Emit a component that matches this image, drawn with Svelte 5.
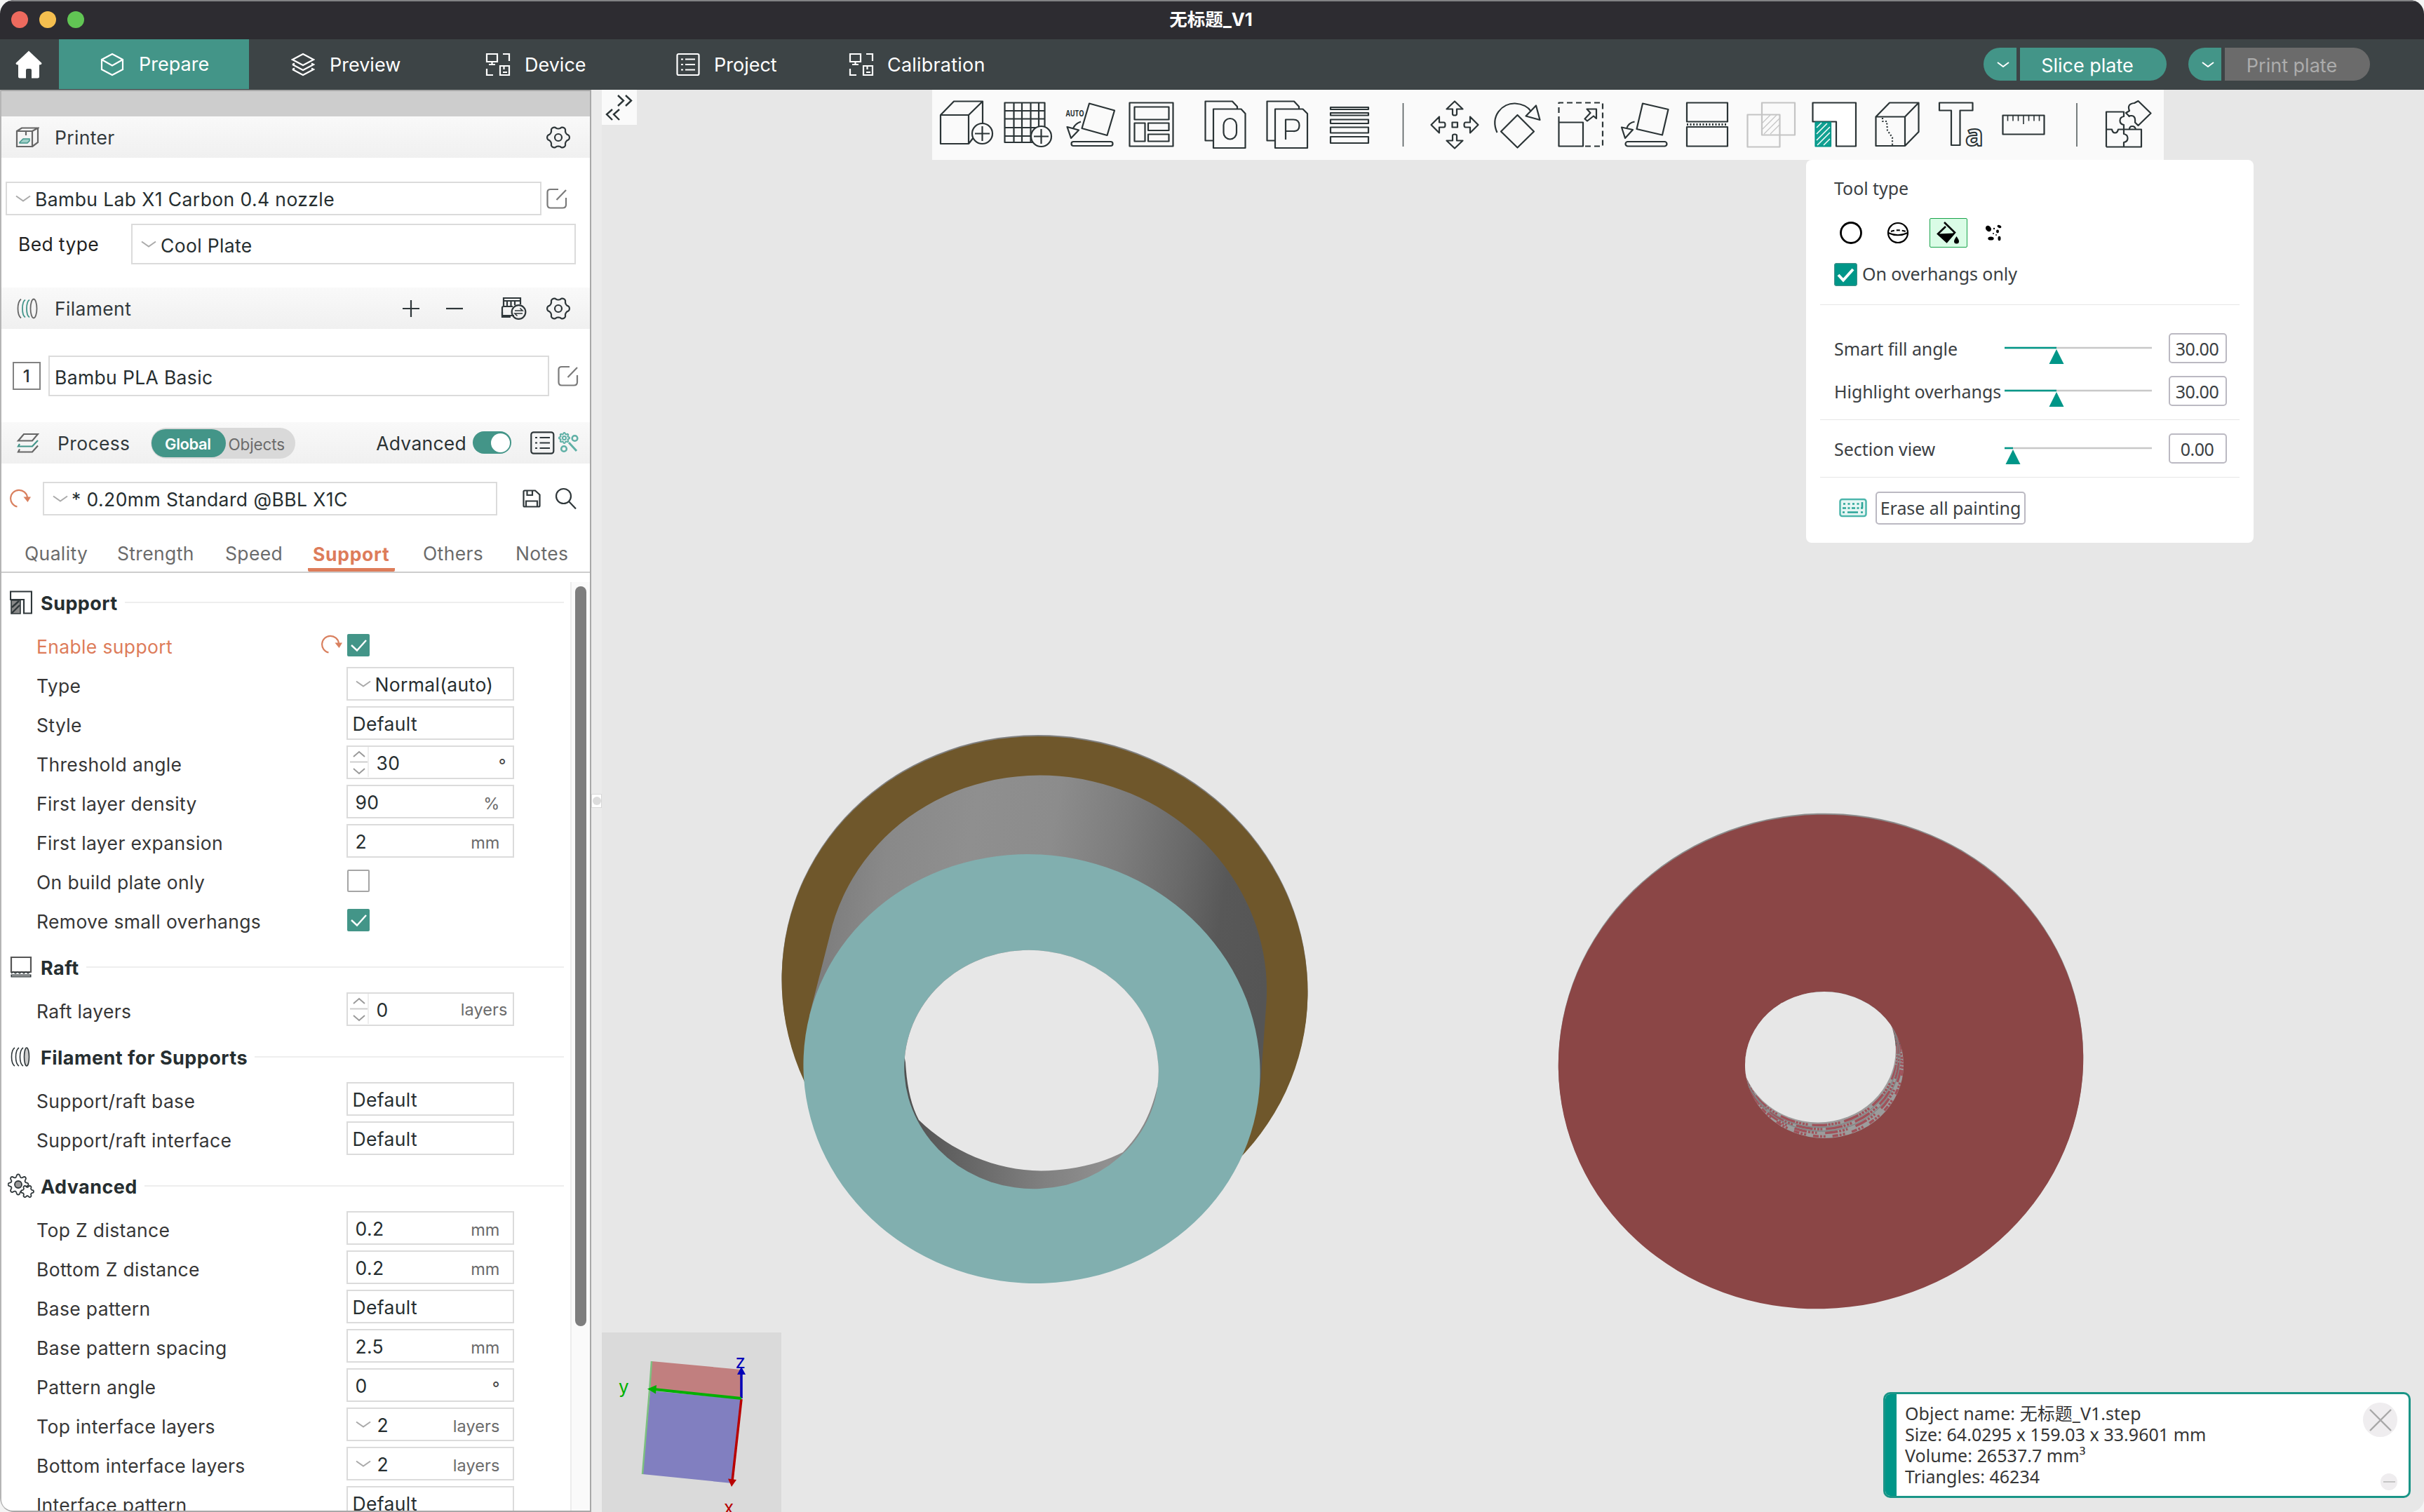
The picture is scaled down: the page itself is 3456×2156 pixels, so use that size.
<script lang="ts">
  const round = (n: number) => Math.round(n * 100) / 100;

  // Closed outline of a soft gear with the given number of lobes.
  function gear(cx: number, cy: number, r: number, depth: number, lobes: number): string {
    const pts: string[] = [];
    for (let i = 0; i < 96; i++) {
      const t = (i / 96) * Math.PI * 2;
      const c = Math.cos(lobes * t);
      const k = r + depth * Math.sign(c) * Math.pow(Math.abs(c), 0.6);
      pts.push(`${round(cx + k * Math.cos(t))} ${round(cy + k * Math.sin(t))}`);
    }
    return 'M' + pts.join('L') + 'Z';
  }

  const nav = [
    { label: 'Preview', icon: 'preview', cls: 'n-preview' },
    { label: 'Device', icon: 'device', cls: 'n-device' },
    { label: 'Project', icon: 'project', cls: 'n-project' },
    { label: 'Calibration', icon: 'device', cls: 'n-calib' },
  ];

  const tabs = ['Quality', 'Strength', 'Speed', 'Support', 'Others', 'Notes'];

  type Row = { label: string; kind: string; value?: string; unit?: string; changed?: boolean; on?: boolean };
  const groups: { title: string; icon: string; rows: Row[] }[] = [
    {
      title: 'Support', icon: 'support',
      rows: [
        { label: 'Enable support', kind: 'check', on: true, changed: true },
        { label: 'Type', kind: 'combo', value: 'Normal(auto)' },
        { label: 'Style', kind: 'select', value: 'Default' },
        { label: 'Threshold angle', kind: 'spin', value: '30', unit: '°' },
        { label: 'First layer density', kind: 'num', value: '90', unit: '%' },
        { label: 'First layer expansion', kind: 'num', value: '2', unit: 'mm' },
        { label: 'On build plate only', kind: 'check', on: false },
        { label: 'Remove small overhangs', kind: 'check', on: true },
      ],
    },
    { title: 'Raft', icon: 'raft', rows: [{ label: 'Raft layers', kind: 'spin', value: '0', unit: 'layers' }] },
    {
      title: 'Filament for Supports', icon: 'spool',
      rows: [
        { label: 'Support/raft base', kind: 'select', value: 'Default' },
        { label: 'Support/raft interface', kind: 'select', value: 'Default' },
      ],
    },
    {
      title: 'Advanced', icon: 'gears',
      rows: [
        { label: 'Top Z distance', kind: 'num', value: '0.2', unit: 'mm' },
        { label: 'Bottom Z distance', kind: 'num', value: '0.2', unit: 'mm' },
        { label: 'Base pattern', kind: 'select', value: 'Default' },
        { label: 'Base pattern spacing', kind: 'num', value: '2.5', unit: 'mm' },
        { label: 'Pattern angle', kind: 'num', value: '0', unit: '°' },
        { label: 'Top interface layers', kind: 'combonum', value: '2', unit: 'layers' },
        { label: 'Bottom interface layers', kind: 'combonum', value: '2', unit: 'layers' },
        { label: 'Interface pattern', kind: 'select', value: 'Default' },
      ],
    },
  ];

  // Toolbar cells: start and width on the toolbar's own axis.
  const tools = [
    { id: 'add', x: 1329, w: 95 }, { id: 'plate', x: 1424, w: 86 }, { id: 'orient', x: 1510, w: 90 },
    { id: 'arrange', x: 1600, w: 95 }, { id: 'objects', x: 1695, w: 95 }, { id: 'parts', x: 1790, w: 90 },
    { id: 'layers', x: 1880, w: 90 }, { id: 'sep1', x: 1970, w: 60 }, { id: 'move', x: 2030, w: 90 },
    { id: 'rotate', x: 2120, w: 90 }, { id: 'scale', x: 2210, w: 90 }, { id: 'flat', x: 2300, w: 90 },
    { id: 'cut', x: 2390, w: 90 }, { id: 'boolean', x: 2480, w: 90 }, { id: 'paint', x: 2570, w: 90 },
    { id: 'seam', x: 2660, w: 90 }, { id: 'text', x: 2750, w: 90 }, { id: 'measure', x: 2840, w: 90 },
    { id: 'sep2', x: 2930, w: 60 }, { id: 'assemble', x: 2990, w: 95 },
  ];

  const ticks = [0, 1, 2, 3, 4, 5, 6];

  const sliders = [
    { label: 'Smart fill angle', value: '30.00', pos: 74 },
    { label: 'Highlight overhangs', value: '30.00', pos: 74 },
  ];
  const section = { label: 'Section view', value: '0.00', pos: 12 };
</script>

{#snippet chevron()}
  <svg class="chev" width="22" height="10" viewBox="0 0 22 10"><path d="M1 1.5 L11 8.5 L21 1.5" /></svg>
{/snippet}

{#snippet settings()}
  <svg class="ico" width="34" height="34" viewBox="0 0 34 34"><path d={gear(17, 17, 14.2, 1.7, 6)} /><circle cx="17" cy="17" r="5" /></svg>
{/snippet}

{#snippet edit()}
  <svg class="ico edit" width="30" height="30" viewBox="0 0 30 30"><path d="M17 2H6Q1.500 2 1.500 6V24Q1.500 28.500 6 28.500H23Q28 28.500 28 24V14" /><path d="M28 3L14.500 17" /></svg>
{/snippet}

{#snippet reset()}
  <svg class="reset" width="30" height="28" viewBox="0 0 30 28"><path d="M10.500 25.500A12 12 0 1 1 25 12" /><path class="tip" d="M19.500 11.500H30L25.500 19Z" /></svg>
{/snippet}

{#snippet slider(s: { label: string; value: string; pos: number })}
  <div class="srow">
    <span class="slabel">{s.label}</span>
    <svg width="212" height="46" viewBox="0 0 212 46">
      <path d="M0 22H210" stroke="#c8c8c8" stroke-width="2.500" />
      <path d="M0 22H{s.pos}" stroke="#009688" stroke-width="2.500" />
      <path d="M{s.pos} 24L{s.pos + 10.5} 45H{s.pos - 10.5}Z" fill="#009688" />
    </svg>
    <span class="sval">{s.value}</span>
  </div>
{/snippet}

{#snippet check(on: boolean | undefined)}
  <span class="check" class:on>
    {#if on}<svg width="32" height="32" viewBox="0 0 32 32"><path d="M6 16L14 23.500L27 9" /></svg>{/if}
  </span>
{/snippet}

<div class="app">
  <header class="title">
    <div class="lights"><i class="red"></i><i class="amber"></i><i class="green"></i></div>
    <span>无标题_V1</span>
  </header>

  <nav class="nav">
    <div class="home">
      <svg width="38" height="40" viewBox="0 0 38 40"><path d="M19 0.500L37.500 18Q37.500 20.500 34 20.500V37Q34 39.500 31.500 39.500H23V28Q23 26 21 26H17Q15 26 15 28V39.500H6.500Q4 39.500 4 37V20.500Q0.500 20.500 0.500 18Z" fill="#fff" /></svg>
    </div>
    <div class="ntab active">
      <svg class="nico" width="34" height="34" viewBox="0 0 34 34"><path d="M17 2L32 10V24L17 32L2 24V10Z" /><path d="M2 10L17 18.500L32 10" /></svg>
      <span>Prepare</span>
    </div>
    {#each nav as n}
      <div class="ntab {n.cls}">
        {#if n.icon === 'preview'}
          <svg class="nico" width="34" height="34" viewBox="0 0 34 34"><path d="M17 2L32 10L17 18L2 10Z" /><path d="M2 17L5 15.500M2 17L17 25L32 17L29 15.500" /><path d="M2 24L5 22.500M2 24L17 32L32 24L29 22.500" /></svg>
        {:else if n.icon === 'device'}
          <svg class="nico" width="36" height="34" viewBox="0 0 36 34"><path d="M2 2H17V13H2ZM9.500 13V17M5 17H14" /><path d="M25 2H34V12M2 23V32H11" /><path d="M21 19H34V32H21ZM26.500 19V24M25 28H31" /></svg>
        {:else}
          <svg class="nico" width="34" height="34" viewBox="0 0 34 34"><rect x="1.500" y="2" width="31" height="30" rx="2" /><path d="M7 9.500H10M13 9.500H27M7 17H10M13 17H27M7 24.500H10M13 24.500H27" /></svg>
        {/if}
        <span>{n.label}</span>
      </div>
    {/each}
    <div class="grow"></div>
    <div class="btn slice">
      <span class="drop"><svg width="18" height="8" viewBox="0 0 18 8"><path d="M1 1L9 7L17 1" /></svg></span>
      <span class="main">Slice plate</span>
    </div>
    <div class="btn print">
      <span class="drop"><svg width="18" height="8" viewBox="0 0 18 8"><path d="M1 1L9 7L17 1" /></svg></span>
      <span class="main">Print plate</span>
    </div>
  </nav>

  <div class="body">
    <aside class="side">
      <div class="strip"></div>

      <div class="head">
        <svg class="ico" width="34" height="30" viewBox="0 0 34 30"><g stroke="#666"><path d="M2 6H24V28H2ZM2 6L9 1.500H32L24 6M32 1.500V22L24 28M15 6V12" /></g><path d="M6 22L11 17H20V20L17 23H6Z" fill="#9fd0c8" stroke="#43958a" stroke-width="1.500" /></svg>
        <span class="htext">Printer</span>
        <span class="end e-printer">{@render settings()}</span>
      </div>
      <div class="row r-printer">
        <div class="box b-printer">{@render chevron()}<span>Bambu Lab X1 Carbon 0.4 nozzle</span></div>
        {@render edit()}
      </div>
      <div class="row r-bed">
        <span class="bedlabel">Bed type</span>
        <div class="box b-bed">{@render chevron()}<span>Cool Plate</span></div>
      </div>

      <div class="head">
        <svg class="ico" width="34" height="30" viewBox="0 0 34 30"><g stroke-width="1.800"><path stroke="#666" d="M8 1.500Q3.500 5 3.500 15T8 28.500" /><path stroke="#43958a" d="M14 2.500Q10 5 10 15T14 27.500M20 2.500Q16 5 16 15T20 27.500" /><ellipse stroke="#666" cx="26" cy="15" rx="4.500" ry="13.500" /></g></svg>
        <span class="htext">Filament</span>
        <span class="end e-filament">
          <svg class="ico" width="24" height="24" viewBox="0 0 24 24"><path d="M12 0V24M0 12H24" /></svg>
          <svg class="ico m-minus" width="24" height="24" viewBox="0 0 24 24"><path d="M0 12H24" /></svg>
          <svg class="ico m-ams" width="37" height="34" viewBox="0 0 37 34"><path d="M4 13V2H28V11M4 6H28M9 6V14M14.500 6V14M20 6V12" /><path d="M19 27H2V16Q2 14 4 14H17" /><path d="M2 22V29H14" /><circle cx="25.500" cy="22" r="9.800" /><path d="M20 20H31L27.500 16.500M31 24H20L23.500 27.500" stroke-width="1.600" /></svg>
          {@render settings()}
        </span>
      </div>
      <div class="row r-fil">
        <span class="slot">1</span>
        <div class="box b-fil"><span>Bambu PLA Basic</span></div>
        {@render edit()}
      </div>

      <div class="head">
        <svg class="ico" width="34" height="30" viewBox="0 0 34 30"><path stroke="#666" d="M12 2H32L24 11.500H4Z" /><path stroke="#43958a" d="M6 16L4 19.500H24L32 11" /><path stroke="#666" d="M6 23.500L4 27.500H24L32 18.500" /></svg>
        <span class="htext t-proc">Process</span>
        <div class="seg"><b>Global</b><span>Objects</span></div>
        <span class="end e-proc">
          <span class="adv">Advanced</span>
          <span class="toggle"><i></i></span>
          <svg class="ico m-list" width="35" height="33" viewBox="0 0 35 33"><rect x="1.300" y="1.300" width="32" height="30.400" rx="3.500" /><path d="M7 9H10M13.500 9H28M7 16.500H10M13.500 16.500H28M7 24H10M13.500 24H28" /></svg>
          <svg class="ico teal" width="30" height="30" viewBox="0 0 30 30"><path d={gear(8.500, 8.500, 6.500, 1, 8)} /><circle cx="8.500" cy="8.500" r="2.500" /><circle cx="23.500" cy="9" r="3.800" stroke-width="2.600" /><circle cx="8" cy="24" r="3.800" stroke-width="2.600" /><path d="M15 15L26 27" stroke-width="3" /></svg>
        </span>
      </div>
      <div class="row r-preset">
        {@render reset()}
        <div class="box b-preset">{@render chevron()}<span>* 0.20mm Standard @BBL X1C</span></div>
        <svg class="ico" width="26" height="26" viewBox="0 0 26 26"><path d="M1.500 3Q1.500 1.500 3 1.500H18L24.500 7.500V23Q24.500 24.500 23 24.500H3Q1.500 24.500 1.500 23ZM6.500 1.500V8H14V1.500M5 24V16.500H21V24" /></svg>
        <svg class="ico m-find" width="32" height="32" viewBox="0 0 32 32"><circle cx="12.500" cy="12.500" r="10.500" /><path d="M20 20L30 30.500" /></svg>
      </div>

      <div class="tabs">
        {#each tabs as t}<span class="tab" class:cur={t === 'Support'}>{t}</span>{/each}
      </div>

      <div class="scroll">
        <div class="groups">
          {#each groups as g}
            <div class="ghead">
              <span class="gicon">
                {#if g.icon === 'support'}
                  <svg class="ico" width="32" height="34" viewBox="0 0 32 34"><path d="M1 13V1.500H31V32.500H20V13Z" /><path d="M2 14H15V33H2Z" fill="#888" stroke-width="1.600" /><path d="M3 24L13 15M3 32L14 21" stroke-width="2.400" /></svg>
                {:else if g.icon === 'raft'}
                  <svg class="ico" width="32" height="34" viewBox="0 0 32 34"><path d="M2 3H30V24H2Z" stroke="#555" /><path d="M2 26L5 24L8 26L11 24L14 26L17 24L20 26L23 24L26 26L29 24" stroke-width="1.300" /><path d="M1.500 29.500H30.500" stroke-width="4" /><path d="M3 29.500H29" stroke="#bbb" stroke-width="1.500" /></svg>
                {:else if g.icon === 'spool'}
                  <svg class="ico" width="32" height="34" viewBox="0 0 32 34"><g stroke-width="1.600"><path d="M7 4Q2.500 7 2.500 17T7 30M13 4Q8.500 7 8.500 17T13 30M19 4Q14.500 7 14.500 17T19 30" /><ellipse cx="24" cy="17" rx="3.500" ry="13" fill="#ccc" /></g></svg>
                {:else}
                  <svg class="ico gears" width="38" height="36" viewBox="0 0 38 36"><path d={gear(15, 16, 12.5, 2, 8)} stroke-width="1.800" /><circle cx="15" cy="16" r="5" fill="#999" stroke-width="1.800" /><path d={gear(28, 26, 7.6, 1.4, 6)} fill="#fff" stroke-width="1.800" /></svg>
                {/if}
              </span>
              <b>{g.title}</b>
              <i></i>
            </div>
            {#each g.rows as r}
              <div class="opt">
                <span class="olabel" class:changed={r.changed}>{r.label}</span>
                <span class="undo">{#if r.changed}{@render reset()}{/if}</span>
                {#if r.kind === 'check'}
                  {@render check(r.on)}
                {:else}
                  <div class="field f-{r.kind}">
                    {#if r.kind === 'spin'}
                      <svg class="spin" width="28" height="44" viewBox="0 0 28 44"><path stroke="#999" d="M6 14L14 7L22 14M6 31L14 38L22 31" /><path stroke="#ccc" d="M1 21.500H26" /><path stroke="#eee" d="M27 0V43" /></svg>
                    {/if}
                    {#if r.kind.startsWith('combo')}{@render chevron()}{/if}
                    <span class="val">{r.value}</span>
                    {#if r.unit}<span class="unit" class:deg={r.unit === '°'}>{r.unit}</span>{/if}
                  </div>
                {/if}
              </div>
            {/each}
          {/each}
        </div>
        <div class="track"><div class="thumb"></div></div>
      </div>
    </aside>

    <div class="sash"><div class="grip"><i></i></div></div>

    <main class="canvas">
      <svg class="scene" width="2598" height="2028" viewBox="858 128 2598 2028">
        <defs>
          <linearGradient id="wall" gradientUnits="userSpaceOnUse" x1="1165" y1="1350" x2="1795" y2="1450">
            <stop offset="0" stop-color="#7c7c7c" /><stop offset="0.120" stop-color="#898989" /><stop offset="0.300" stop-color="#8f8f8f" />
            <stop offset="0.480" stop-color="#8c8c8c" /><stop offset="0.640" stop-color="#7c7c7c" /><stop offset="0.780" stop-color="#696969" /><stop offset="0.880" stop-color="#585858" /><stop offset="1" stop-color="#555" />
          </linearGradient>
          <linearGradient id="bore" gradientUnits="userSpaceOnUse" x1="1289" y1="0" x2="1650" y2="0">
            <stop offset="0" stop-color="#505050" /><stop offset="0.250" stop-color="#666" /><stop offset="0.550" stop-color="#808080" /><stop offset="0.800" stop-color="#909090" /><stop offset="1" stop-color="#868686" />
          </linearGradient>
          <clipPath id="tube">
            <ellipse cx="1491" cy="1404.500" rx="316" ry="298" transform="rotate(13 1491 1404.500)" />
            <path d="M1184.500 1328L1154 1448L1200 1560L1760 1560L1796.800 1550L1805 1437Z" />
          </clipPath>
          <clipPath id="holeA"><ellipse cx="1470.500" cy="1525" rx="181.500" ry="170" transform="rotate(8 1470.500 1525)" /></clipPath>
          <clipPath id="holeB"><ellipse cx="2601" cy="1518.500" rx="113" ry="104.500" /></clipPath>
        </defs>

        <ellipse cx="1489.500" cy="1404" rx="376" ry="355" transform="rotate(13 1489.500 1404)" fill="#808080" />
        <ellipse cx="1489.500" cy="1406" rx="376" ry="355" transform="rotate(13 1489.500 1406)" fill="#6f572b" />
        <rect x="1120" y="1080" width="720" height="500" fill="url(#wall)" clip-path="url(#tube)" />
        <ellipse cx="1471" cy="1524" rx="326" ry="305.500" transform="rotate(8.500 1471 1524)" fill="#81afaf" />
        <g clip-path="url(#holeA)">
          <path d="M1250 1300H1700V1750H1250Z" fill="url(#bore)" />
          <path d="M1310 1597C1356 1642 1420 1669 1484 1669.500C1530 1669.500 1572 1658 1601 1643C1625 1618 1640 1592 1650 1550L1700 1540V1300H1250L1291 1515C1293 1550 1299 1576 1310 1597Z" fill="#e7e7e7" />
        </g>

        <ellipse cx="2596" cy="1512.500" rx="374.500" ry="352.500" transform="rotate(-6.700 2596 1512.500)" fill="#8b8b8b" />
        <ellipse cx="2596" cy="1514" rx="374.500" ry="352" transform="rotate(-6.700 2596 1514)" fill="#8b4646" />
        <g clip-path="url(#holeB)" fill="none">
          <path d="M2480 1400H2720V1630H2480Z" fill="#9c9c9c" />
          <path d="M2560 1400H2720V1500L2700 1490Z" fill="#555" />
          <g stroke="#a0525a" stroke-width="3.500">
            <ellipse cx="2593" cy="1500" rx="112.500" ry="104.500" stroke-dasharray="3 1.500 3 2 3 1.500 3 1.500 22 6" />
            <ellipse cx="2595.500" cy="1505.500" rx="112.500" ry="104.500" stroke-dasharray="3 2 3 1.500 24 5 3 1.500" />
            <ellipse cx="2598" cy="1511" rx="112.500" ry="104.500" stroke-dasharray="2.500 2 3 2 3 2 18 12" />
            <ellipse cx="2600.500" cy="1516" rx="112.500" ry="104.500" stroke-dasharray="3 2 3 2 8 10" />
          </g>
          <g stroke="#7f8585" stroke-width="1.300">
            <ellipse cx="2594" cy="1503" rx="112" ry="104.500" /><ellipse cx="2597" cy="1508.500" rx="112" ry="104.500" />
          </g>
          <ellipse cx="2592" cy="1496.500" rx="110.800" ry="104" fill="#e7e7e7" />
        </g>
      </svg>

      <div class="collapse">
        <svg width="50" height="50" viewBox="0 0 50 50"><path d="M23 8L31 15.500L23 23M34 8L42 15.500L34 23M15 28L7 35L15 43M25 28L17 35L25 43" /></svg>
      </div>

      <div class="toolbar">
        {#each tools as t}
          <svg width={t.w} height="100" viewBox="{t.x} 128 {t.w} 100">
            {#if t.id === 'add'}
              <path d="M1341 164H1381V205H1341ZM1341 164L1360 144.500H1401L1381 164M1401 144.500V176M1381 205L1388 196" />
              <circle class="bg" cx="1400.500" cy="190.500" r="14.500" /><path d="M1390 190.500H1411M1400.500 180V201" />
            {:else if t.id === 'plate'}
              <path d="M1432.500 146.500H1489.500V203H1432.500ZM1445.500 146.500V203M1457 146.500V203M1469.500 146.500V203M1481 146.500V203M1432.500 158H1489.500M1432.500 169.500H1489.500M1432.500 182H1489.500M1432.500 194H1489.500" />
              <circle class="bg" cx="1484.500" cy="194.500" r="14.500" /><path d="M1474 194.500H1495M1484.500 184V205" />
            {:else if t.id === 'orient'}
              <text x="1519.500" y="166" textLength="26" lengthAdjust="spacingAndGlyphs">AUTO</text>
              <path d="M1553 147.500L1589 157.500L1578.500 193L1542.500 183Z" /><path d="M1541 173.500Q1533 176 1530 183" /><path d="M1521.500 181L1538 185.500L1527 197Z" />
              <rect x="1527.500" y="202" width="59" height="6" rx="3" />
            {:else if t.id === 'arrange'}
              <path d="M1610.500 146.500H1672.500V208.500H1610.500ZM1617.500 152.500H1666.500V170.500H1617.500ZM1617.500 175.500H1632.500V201.500H1617.500ZM1637 175.500H1666.500V186H1637ZM1637 191.500H1666.500V201.500H1637Z" />
            {:else if t.id === 'objects'}
              <path d="M1729.500 200.500H1718.500V144.500H1757L1764 152V155.500" /><path d="M1730 155.500H1769.500L1775.500 162V211H1730Z" /><rect x="1744.500" y="169" width="18.500" height="29.500" rx="9.250" />
            {:else if t.id === 'parts'}
              <path d="M1818 200.500H1806.500V144.500H1845L1852 152V155.500" /><path d="M1818 155.500H1857.500L1864 162V211H1818Z" /><path d="M1833 199V170.500H1844Q1852.500 170.500 1852.500 179T1844 187H1833" />
            {:else if t.id === 'layers'}
              <path d="M1897 153H1951V156H1897ZM1897 161H1951V164.500H1897ZM1897 170.500H1951V176H1897ZM1897 181.500H1951V189.500H1897ZM1897 195H1951V204H1897Z" />
            {:else if t.id === 'sep1'}
              <path class="sep" d="M2000.500 147V209" />
            {:else if t.id === 'move'}
              <rect x="2070.500" y="174.500" width="7.500" height="7" />
              <path d="M2074 144.500L2085.500 155.500H2077V162.500Q2077 164.500 2074 164.500T2071 162.500V155.500H2062.500ZM2074 211.500L2085.500 200.500H2077V193.500Q2077 191.500 2074 191.500T2071 193.500V200.500H2062.500ZM2040.500 178L2052 166.500V174.500H2058.500Q2060.500 174.500 2060.500 178T2058.500 181.500H2052V189.500ZM2107.500 178L2096 166.500V174.500H2089.500Q2087.500 174.500 2087.500 178T2089.500 181.500H2096V189.500Z" />
            {:else if t.id === 'rotate'}
              <path d="M2163.500 164L2187 187.500L2163.500 210.500L2140 187.500Z" /><path d="M2134.500 189C2124 165 2142 147 2160 147.500Q2176 148.500 2183 159" /><path d="M2190 150.500L2195.500 171L2175.500 165.500Z" />
            {:else if t.id === 'scale'}
              <path d="M2222.500 174.500H2257V208.500H2222.500Z" /><path stroke-dasharray="8 5" d="M2222.500 174V146.500H2285V208.500H2257" /><path d="M2262.500 155.500H2276V169L2272 165.500L2263 172.500L2259.500 169.500L2267.500 161Z" />
            {:else if t.id === 'flat'}
              <path d="M2342 147.500L2378.500 156L2370 192.500L2333.500 184Z" /><path d="M2330.500 173.500Q2322 175 2319.500 182.500" /><path d="M2312 181.500L2328 185L2317 197Z" /><rect x="2317.500" y="202" width="59" height="6.500" rx="3.200" />
            {:else if t.id === 'cut'}
              <path d="M2405 146.500H2463V173.500H2405ZM2405 181H2463V208.500H2405Z" /><path stroke-dasharray="2 2.500" stroke-width="3" d="M2405 177.500H2463" />
            {:else if t.id === 'boolean'}
              <g stroke="#c4c4c4"><path d="M2512 146.500H2559V192.500H2512ZM2491.500 163.500H2537.500V209.500H2491.500Z" /><path stroke-width="1.200" d="M2513 175L2524 164M2513 184L2533 164M2515 191L2537 169M2524 191L2537 178" /></g>
            {:else if t.id === 'paint'}
              <path fill="#fff" d="M2584.500 173.500V146.500H2646V208.500H2618V173.500Z" /><path fill="#12a192" stroke="#009688" d="M2588.500 174.500H2610V208.500H2588.500Z" /><path stroke="#fff" stroke-width="1.500" d="M2590 182L2597 175M2590 191L2605 176M2590 200L2609 181M2591 207L2609 189M2600 207L2609 198" />
            {:else if t.id === 'seam'}
              <path d="M2674.500 166.500H2716V208H2674.500ZM2674.500 166.500L2694 146.500H2735.500L2716 166.500M2735.500 146.500V188L2716 208" /><path stroke-dasharray="2 2.500" d="M2684 168V173H2690L2691 186L2698 196V207" />
            {:else if t.id === 'text'}
              <path d="M2765 146.500H2812.500V157.500H2794.500V207H2782V157.500H2765Z" /><text class="letter" x="2802" y="208">a</text>
            {:else if t.id === 'measure'}
              <path d="M2855.500 164.500H2914.500V191.500H2855.500Z" /><path stroke-width="1.600" d={ticks.map((i) => `M${2862.5 + i * 7.5} 165V${i === 3 ? 177 : 172.5}`).join('')} />
            {:else if t.id === 'sep2'}
              <path class="sep" d="M2961 147V209" />
            {:else}
              <path d="M3003 209.500V159.500H3028V166Q3022.500 167 3022.500 172T3028 178V184.500M3003 184.500H3011Q3012 189.500 3015.500 189.500T3020 184.500H3053V209.500H3003M3028 184.500V191Q3033.500 192 3033.500 197T3028 203V209.500" /><path d="M3036 184.500Q3036 180 3040 180T3045 184.500" />
              <path d="M3048.500 144L3066.500 161.500L3048.500 179L3044 174.500Q3045 165 3039 165T3036 166L3031 161L3036 158Q3032 148 3043 147Z" />
            {/if}
          </svg>
        {/each}
      </div>

      <section class="panel">
        <div class="ptitle">Tool type</div>
        <div class="ptools">
          <span class="pt"><svg width="36" height="36" viewBox="0 0 36 36"><circle cx="18" cy="18" r="14.500" fill="none" stroke="#000" stroke-width="2.800" /></svg></span>
          <span class="pt"><svg width="36" height="36" viewBox="0 0 36 36"><g fill="none" stroke="#000" stroke-width="2.200"><circle cx="18" cy="18" r="14" /><path d="M4 18Q18 24.500 32 18" /><path stroke-dasharray="5 3" d="M8 16Q18 12.500 29 16" /></g></svg></span>
          <span class="pt sel"><svg width="36" height="36" viewBox="0 0 36 36"><path d="M12 3L27 17.500L15.500 31L3 19.500L14 9" fill="none" stroke="#000" stroke-width="2.600" /><path d="M3 19.500L26 18.500L15.500 32Z" /><path d="M29.500 23Q33 28 33 30A3.400 3.400 0 0 1 26 30Q26 28 29.500 23Z" /></svg></span>
          <span class="pt"><svg width="36" height="36" viewBox="0 0 36 36"><ellipse cx="10" cy="12" rx="3.600" ry="4.600" transform="rotate(-40 10 12)" /><ellipse cx="25.500" cy="9" rx="3" ry="1.900" transform="rotate(25 25.500 9)" /><ellipse cx="23" cy="16" rx="2" ry="2.400" /><ellipse cx="13.500" cy="26" rx="4.200" ry="2.600" /><ellipse cx="25.500" cy="26" rx="2" ry="3.300" /><circle cx="18" cy="12" r="1.200" /><circle cx="17" cy="19" r="1" /><circle cx="21" cy="21" r="0.900" /></svg></span>
        </div>
        <div class="pcheck">
          <span class="pbox"><svg width="33" height="33" viewBox="0 0 33 33"><path d="M6 17L13 24.500L27 9" /></svg></span>
          <span>On overhangs only</span>
        </div>
        <hr class="h1" />
        {#each sliders as s}{@render slider(s)}{/each}
        <hr />
        {@render slider(section)}
        <hr />
        <div class="pfoot">
          <svg width="40" height="28" viewBox="0 0 40 28"><rect x="1.500" y="2" width="37" height="24" rx="3" fill="#e6f6f4" stroke="#4db6ac" stroke-width="2.500" /><g stroke="#2ba598" stroke-width="2.600"><path stroke-dasharray="3 3.500" d="M6 8.500H31" /><path d="M33 6V15" /><path stroke-dasharray="5 2.500 3 2.500" d="M5 14.500H34" /><path d="M5 20.500H8M12 20.500H27M31 20.500H34" /></g></svg>
          <span class="erase">Erase all painting</span>
        </div>
      </section>

      <div class="axes">
        <svg width="256" height="256" viewBox="858 1900 256 256">
          <path d="M929 1941L1057 1953V1995L927 1981Z" fill="#c17f7f" />
          <path d="M927 1983L1057 1995L1044 2115L916 2102Z" fill="#817fc0" />
          <path d="M929 1941L926 1983L916 2102" fill="none" stroke="#7cc07f" stroke-width="2.500" />
          <path d="M1057 1994V1956" stroke="#0000b8" stroke-width="3.500" /><path d="M1057 1949L1063 1960H1051Z" fill="#0000b8" />
          <path d="M1057 1995L1044 2112" stroke="#b80000" stroke-width="3.500" /><path d="M1043 2120L1038 2108.500L1050 2110Z" fill="#b80000" />
          <path d="M1057 1994L932 1981" stroke="#00b000" stroke-width="4" /><path d="M923 1980.500L936 1975L935 1987.500Z" fill="#00b000" />
          <text x="1048.500" y="1951" fill="#0000b8">z</text><text x="882" y="1987" fill="#00b000">y</text><text x="1032" y="2159" fill="#b80000">x</text>
        </svg>
      </div>

      <div class="note">
        <div class="bar"></div>
        <div class="lines">
          <div>Object name: 无标题_V1.step</div>
          <div>Size: 64.0295 x 159.03 x 33.9601 mm</div>
          <div>Volume: 26537.7 mm³</div>
          <div>Triangles: 46234</div>
        </div>
        <div class="acts">
          <span class="close"><svg width="32" height="32" viewBox="0 0 32 32"><path d="M1 1L31 31M31 1L1 31" /></svg></span>
          <span class="min"></span>
        </div>
      </div>
    </main>
  </div>
</div>

<style>
  :global(body) { background: #f4f4f4; }
  .app { width: 3456px; height: 2156px; display: flex; flex-direction: column; overflow: hidden; border-radius: 20px; font-family: Inter, 'Noto Sans CJK SC', sans-serif; font-size: 26.5px; letter-spacing: 0.35px; color: #2b3234; line-height: 1.2; background: #e7e7e7; }
  svg { display: block; flex: none; }

  .title { height: 56px; flex: none; display: grid; grid-template-columns: 1fr auto 1fr; align-items: center; background: #2d2c31; box-shadow: inset 0 2px #828285; color: #fff; font-size: 25.5px; font-weight: 700; letter-spacing: 0; padding-right: 3px; }
  .lights { display: flex; gap: 16px; padding-left: 16px; }
  .lights i { width: 24px; height: 24px; border-radius: 50%; }
  .red { background: #ed6a5e; }
  .amber { background: #f5bf4f; }
  .green { background: #61c554; }

  .nav { height: 72px; flex: none; display: flex; align-items: stretch; background: #3d4446; color: #fff; font-size: 27px; letter-spacing: 0; }
  .home { width: 84px; flex: none; display: flex; align-items: center; padding-left: 22px; box-sizing: border-box; }
  .ntab { display: flex; align-items: center; gap: 21px; box-sizing: border-box; flex: none; }
  .ntab span { padding-top: 2px; }
  .nico { fill: none; stroke: #fff; stroke-width: 2.2; }
  .active { width: 271px; margin-bottom: 1px; padding-left: 59px; background: #439588; }
  .n-preview { width: 278px; padding-left: 60px; }
  .n-device { width: 271px; padding-left: 59px; gap: 20px; }
  .n-project { width: 246px; padding-left: 60px; gap: 20px; }
  .n-calib { width: 246px; padding-left: 60px; gap: 19px; letter-spacing: 0.2px; }
  .grow { flex: 1; }
  .btn { display: flex; gap: 5px; padding: 12px 0 13px; letter-spacing: 0; }
  .btn span { display: flex; align-items: center; justify-content: center; }
  .btn svg { fill: none; stroke: #fff; stroke-width: 2; }
  .drop { width: 47px; background: #439588; border-radius: 24px 0 0 24px; box-sizing: border-box; padding-left: 8px; }
  .main { background: #439588; border-radius: 0 24px 24px 0; box-sizing: border-box; }
  .slice .main { width: 209px; padding: 6px 17px 0 0; }
  .slice { margin-right: 31px; }
  .print .main { width: 207px; background: #6b6b6b; color: #acacac; padding: 6px 16px 0 0; }
  .print { margin-right: 77px; }

  .body { flex: 1; min-height: 0; display: flex; }
  .side { width: 843px; flex: none; box-sizing: border-box; border: 2px solid #a8a8a8; border-left-color: #b5b5b5; background: #fff; display: flex; flex-direction: column; border-bottom-left-radius: 18px; overflow: hidden; }
  .strip { height: 36px; flex: none; background: #cdcdcd; }
  .head { height: 59px; flex: none; display: flex; align-items: center; background: linear-gradient(#f9f9f9, #f0f0f0); padding-left: 20px; }
  .ico { fill: none; stroke: #2f373a; stroke-width: 2.2; }
  .edit { stroke: #7a7a7a; }
  .teal { stroke: #5fb0a6; stroke-width: 2; }
  .htext { margin-left: 22px; padding-top: 2px; color: #32393c; }
  .t-proc { margin-left: 26px; }
  .end { margin-left: auto; display: flex; align-items: center; }
  .e-printer, .e-filament { margin-right: 28px; }
  .m-minus { margin-left: 38px; }
  .m-ams { margin: 0 28px 0 54px; }
  .e-proc { margin-right: 15px; }
  .adv { padding-top: 2px; letter-spacing: 0.25px; }
  .toggle { width: 55px; height: 32px; margin: 0 27px 0 9px; border-radius: 16px; background: #439588; display: flex; justify-content: flex-end; align-items: center; }
  .toggle i { width: 27px; height: 27px; margin-right: 2px; border-radius: 50%; background: #fff; }
  .m-list { margin-right: 5px; }
  .seg { margin-left: 30px; width: 206px; height: 44px; border-radius: 22px; background: #d9d9d9; display: flex; align-items: center; font-size: 22.5px; letter-spacing: -0.1px; color: #6b6b6b; box-sizing: border-box; padding-left: 1px; }
  .seg b { width: 106px; height: 40px; border-radius: 20px; background: #439588; color: #fff; font-weight: 600; font-size: 22px; letter-spacing: -0.4px; display: flex; align-items: center; justify-content: center; padding: 3px 3px 0 0; box-sizing: border-box; }
  .seg span { padding: 3px 0 0 3px; }

  .row { display: flex; align-items: center; flex: none; box-sizing: border-box; }
  .box { box-sizing: border-box; border: 2px solid #dbdbdb; display: flex; align-items: center; flex: none; color: #262e30; }
  .box span { padding-top: 4px; }
  .chev { fill: none; stroke: #aaa; stroke-width: 2; }
  .r-printer { padding: 34px 0 0 6px; }
  .b-printer { width: 764px; height: 48px; margin-right: 7px; padding-left: 12px; gap: 6px; letter-spacing: 0.4px; }
  .r-bed { padding: 12px 0 33px 24px; }
  .bedlabel { width: 161px; color: #222; padding-top: 2px; }
  .b-bed { width: 634px; height: 58px; padding-left: 12px; gap: 6px; }
  .b-bed span { padding-top: 6px; }
  .r-fil { padding: 38px 0 37px 16px; }
  .slot { width: 40px; height: 40px; box-sizing: border-box; border: 2px solid #828282; margin-right: 11px; display: flex; align-items: center; justify-content: center; font-size: 24px; font-weight: 500; padding-top: 2px; }
  .b-fil { width: 714px; height: 58px; margin-right: 12px; padding-left: 7px; }
  .b-fil span { padding-top: 5px; }
  .r-preset { padding: 26px 0 0 12px; }
  .b-preset { width: 648px; height: 48px; margin: 0 36px 0 17px; padding-left: 12px; gap: 5px; letter-spacing: 0.42px; }
  .m-find { margin-left: 20px; }
  .reset { fill: none; stroke: #d9805f; stroke-width: 2.2; }
  .tip { fill: #d9805f; stroke: none; }

  .tabs { height: 82px; flex: none; box-sizing: border-box; border-bottom: 2px solid #cdcdcd; display: grid; grid-template-columns: 132px 154px 118px 164px 132px auto; padding-left: 33px; align-items: end; color: #6b6b6b; }
  .tab { padding-bottom: 9px; height: 32px; }
  .tab:nth-child(n + 5) { margin-left: 0; }
  .cur { color: #dd7c5a; font-weight: 700; border-bottom: 5px solid #dd7c5a; padding: 2px 0 3px 7px; box-sizing: border-box; height: 42px; letter-spacing: 0.7px; width: 124px; border-radius: 2px; }

  .scroll { flex: 1; min-height: 0; display: flex; overflow: hidden; }
  .groups { flex: 1; padding-top: 6px; }
  .ghead { height: 72px; display: flex; align-items: center; font-size: 27px; }
  .gicon { width: 56px; padding-left: 12px; box-sizing: border-box; flex: none; }
  .gears { margin-left: -3px; }
  .ghead b { font-weight: 700; color: #262e30; padding-top: 5px; letter-spacing: 0.45px; }
  .ghead i { flex: 1; height: 2px; margin: 0 9px 0 10px; background: #eee; }
  .opt { height: 56px; display: flex; align-items: flex-start; }
  .olabel { width: 405px; padding: 12px 0 0 50px; box-sizing: border-box; color: #363636; }
  .changed { color: #dd7c5a; }
  .undo { width: 86.500px; height: 48px; display: flex; align-items: center; box-sizing: border-box; padding-left: 51px; flex: none; }
  .field { width: 239px; height: 48px; box-sizing: border-box; border: 2px solid #dbdbdb; display: flex; align-items: center; color: #262e30; }
  .val { padding-top: 3px; }
  .f-select { padding-left: 7px; }
  .f-num { padding-left: 11px; }
  .f-combo { padding-left: 11px; gap: 6px; }
  .f-combonum { padding-left: 11px; gap: 9px; }
  .spin { fill: none; stroke-width: 2; margin: 0 11px 0 2px; }
  .unit { margin-left: auto; padding: 7px 18px 0 0; color: #6b6b6b; font-size: 23.5px; letter-spacing: 0.1px; }
  .f-spin .unit { padding: 3px 7px 0 0; }
  .unit.deg { padding-top: 8px; padding-right: 18px; color: #444; }
  .f-spin .unit.deg { padding-right: 9px; }
  .check { width: 32px; height: 32px; margin: 9px 0 0 1px; box-sizing: border-box; border: 2px solid #a5a5a5; border-radius: 2px; background: #fff; }
  .check.on { background: #439588; border: 0; }
  .check svg { fill: none; stroke: #fff; stroke-width: 2.4; }
  .track { width: 28px; flex: none; margin-top: 13px; background: #fafafa; border-left: 2px solid #ececec; box-sizing: border-box; padding: 6px 0 0 5px; }
  .thumb { width: 16px; height: 1055px; border-radius: 8px; background: #7e7e7e; }

  .sash { width: 15px; flex: none; background: #ebebeb; display: flex; flex-direction: column; padding-top: 1004px; box-sizing: border-box; }
  .grip { height: 20px; background: #fff; border: 1px solid #d8d8d8; box-sizing: border-box; display: flex; align-items: center; justify-content: center; }
  .grip i { width: 12px; height: 12px; border-radius: 50%; background: #dcdcdc; }

  .canvas { flex: 1; position: relative; background: #e7e7e7; overflow: hidden; }
  .scene { position: absolute; inset: 0; }
  .collapse { position: absolute; left: 0; top: 0; background: #fafafa; }
  .collapse svg { fill: none; stroke: #2b3436; stroke-width: 2.4; }
  .toolbar { position: absolute; left: 471px; top: 0; width: 1756px; height: 100px; display: flex; background: #fafafa; }
  .toolbar svg { fill: none; stroke: #2b3436; stroke-width: 2.2; stroke-linejoin: round; }
  .toolbar .bg { fill: #fafafa; }
  .toolbar .sep { stroke: #555d5f; stroke-width: 1.6; }
  .toolbar text { font: 700 12px 'Open Sans', sans-serif; fill: #2b3436; stroke: none; letter-spacing: 0; }
  .toolbar .letter { font: 700 43px 'Noto Sans', sans-serif; fill: #fafafa; stroke: #2b3436; stroke-width: 2; }

  .panel { position: absolute; left: 1717px; top: 100px; width: 638px; height: 546px; box-sizing: border-box; background: #fff; border-radius: 8px; padding: 16px 20px 18px; display: flex; flex-direction: column; font-family: 'Noto Sans', sans-serif; font-size: 25px; letter-spacing: -0.05px; color: #3b4043; }
  .ptitle { height: 48px; line-height: 49px; padding-left: 20px; flex: none; }
  .ptools { height: 79px; flex: none; display: flex; align-items: center; padding-left: 17px; gap: 13px; }
  .pt { width: 54px; height: 42px; display: flex; align-items: center; justify-content: center; border: 1.5px solid transparent; box-sizing: border-box; border-radius: 2px; }
  .pt.sel { background: #dafce6; border-color: #17a34a; margin: 0 -2px 0 5px; }
  .pcheck { height: 41px; flex: none; display: flex; align-items: center; gap: 7px; padding-left: 20px; line-height: 32px; }
  .pcheck span:last-child { margin-top: -3px; }
  .pbox { width: 33px; height: 33px; border-radius: 4px; background: #009688; box-shadow: inset 0 0 0 1px #4a8f8a; }
  .pbox svg { fill: none; stroke: #fff; stroke-width: 4; }
  hr { border: 0; height: 1px; width: 100%; flex: none; background: #e6e6e6; margin: 10px 0; }
  .h1 { margin: 22px 0 31px; }
  .srow { height: 61px; flex: none; display: flex; align-items: center; padding-left: 20px; }
  .slabel { width: 243px; white-space: nowrap; line-height: 36px; }
  .sval { width: 83px; height: 43px; box-sizing: border-box; margin-left: 22px; border: 2px solid #bbb9c2; border-radius: 5px; display: flex; align-items: center; justify-content: center; letter-spacing: -0.5px; line-height: 34px; padding-right: 2px; }
  .pfoot { height: 66px; flex: none; display: flex; align-items: center; gap: 12px; padding-left: 27px; }
  .erase { width: 214px; height: 47px; box-sizing: border-box; border: 2px solid #bbb9c2; border-radius: 5px; display: flex; align-items: center; justify-content: center; white-space: nowrap; }

  .axes { position: absolute; left: 0; bottom: 0; background: #dadada; }
  .axes text { font: 26px Inter, sans-serif; letter-spacing: 0; }

  .note { position: absolute; left: 1827px; top: 1857px; width: 752px; height: 151px; box-sizing: border-box; border: 3px solid #1a9587; border-radius: 10px; background: #fff; display: flex; overflow: hidden; font-family: 'Noto Sans', 'Noto Sans CJK SC', sans-serif; font-size: 25px; letter-spacing: 0.04px; color: #363636; }
  .bar { width: 16px; background: #009688; }
  .lines { padding: 12px 0 0 12px; line-height: 30px; flex: 1; white-space: nowrap; }
  .lines div { height: 30px; }
  .acts { display: flex; flex-direction: column; align-items: flex-end; justify-content: space-between; padding: 12px 16px 8px 0; }
  .close { width: 49px; height: 49px; border-radius: 50%; background: #efedef; display: flex; align-items: center; justify-content: center; }
  .close svg { stroke: #a8a8a8; stroke-width: 2.4; }
  .min { width: 24px; height: 24px; border-radius: 50%; background: linear-gradient(#c4c4c4, #c4c4c4) center / 17px 2px no-repeat #efedef; }
</style>
